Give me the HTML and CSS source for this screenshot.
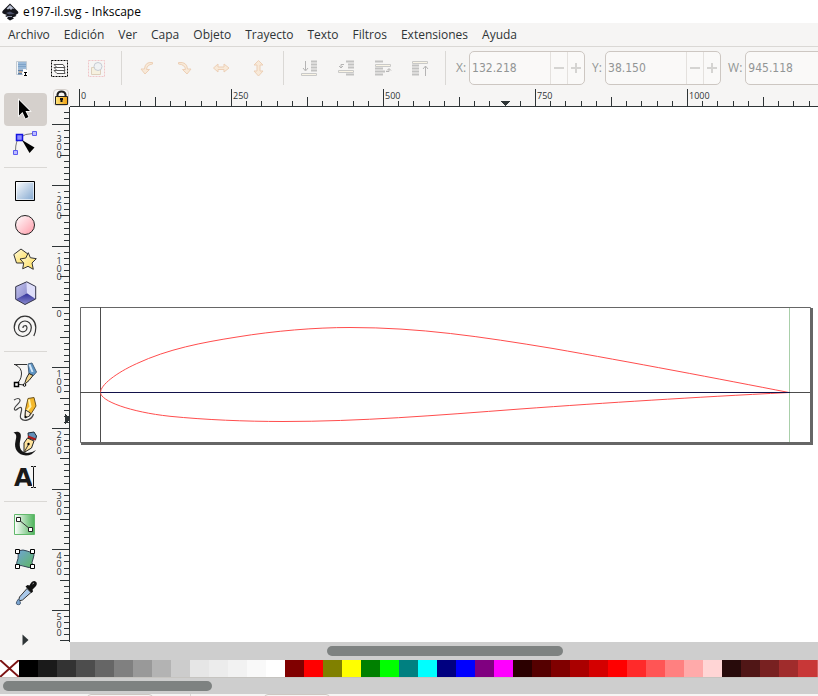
FILE: index.html
```html
<!DOCTYPE html>
<html lang="es">
<head>
<meta charset="utf-8">
<title>e197-il.svg - Inkscape</title>
<link rel="stylesheet" href="styles.css">
</head>
<body>
<header class="titlebar">
  <svg class="logo" width="18" height="18" viewBox="0 0 18 18" aria-hidden="true">
    <path d="M8 .5 1 7.500Q-1 10 2 11l3 1-2 1 3 1.500-1 1 3 2L12 15.500l-1.500-1 4-1.500-1-1 2.500-1.500Q17 9 15 7.500Z" fill="#15161c"/>
    <path d="M8 2 4.500 5.500l1.500 1L7.500 5.500 9 7l1.500-1.500 2 .5Z" fill="#b9c0d2"/>
    <path d="M4 10 8 8.500l5 2.500-6 .5Z" fill="#4a5068"/>
    <path d="M5 13.500h5" stroke="#8c93a8"/>
  </svg>
  <span>e197-il.svg - Inkscape</span>
</header>

<nav class="menubar">
  <button>Archivo</button><button>Edición</button><button>Ver</button><button>Capa</button><button>Objeto</button><button>Trayecto</button><button>Texto</button><button>Filtros</button><button>Extensiones</button><button>Ayuda</button>
</nav>

<div class="toolbar">
  <button class="tb" aria-label="Seleccionar todo">
    <svg width="17" height="17" viewBox="0 0 17 17"><path d="M2.500 1.500h10v13h-10z" fill="#f4f6f8" stroke="#c3cbd2"/><path d="M4 2h8v7H4z" fill="#9bbad9"/><path d="M4 4.500h8M4 6.500h8" stroke="#7fa3c8"/><path d="M4 10.500h5M4 13.500h4" stroke="#5b7fa8" stroke-width="2"/><path d="M5 12h3" stroke="#d99a5b"/><path d="M9 10h5v6H9z" fill="#fff"/><path d="M10 12.500h3M10 15.500h3M11.500 12.500v3" stroke="#000"/></svg>
  </button>
  <button class="tb" aria-label="Seleccionar en todas las capas">
    <svg width="17" height="17" viewBox="0 0 17 17"><path d="M.5.5h16v16H.5z" fill="none" stroke="#000" stroke-dasharray="2 1"/><g fill="#fff" stroke="#555"><path d="m3 10.500 3 3h8l-1-3z"/><path d="m3 7.500 3 3h8l-1-3z"/><path d="m3 4.500 3 3h8l-2-3z"/></g></svg>
  </button>
  <button class="tb off" aria-label="Deseleccionar" disabled>
    <svg width="17" height="17" viewBox="0 0 17 17"><path d="M.5.5h16v16H.5z" fill="none" stroke="#e87f88" stroke-dasharray="2 1"/><path d="M3.500 7.500h9v7h-9z" fill="#f7ecc0" stroke="#b99b6a"/><circle cx="10" cy="6.500" r="4" fill="#e9eef4" stroke="#7e8fa5"/></svg>
  </button>
  <i class="sep"></i>
  <button class="tb off" aria-label="Rotar a la izquierda" disabled>
    <svg width="17" height="17" viewBox="0 0 17 17"><path d="M13.500 2.500Q6 1.500 5.500 9H2l4 5 4.500-4.500-3 0Q8 4.500 13.500 4Z" class="arrow"/></svg>
  </button>
  <button class="tb off" aria-label="Rotar a la derecha" disabled>
    <svg width="17" height="17" viewBox="0 0 17 17"><path d="M2.500 2.500Q11 1.500 11.500 9H15l-4 5-4.500-4.500 3 0Q9 4.500 2.500 4Z" class="arrow"/></svg>
  </button>
  <button class="tb off" aria-label="Reflejar horizontalmente" disabled>
    <svg width="17" height="17" viewBox="0 0 17 17"><path d="M.5 8 5 4v3h6V4l5 4-5 4V9.500H5V12Z" class="arrow"/></svg>
  </button>
  <button class="tb off" aria-label="Reflejar verticalmente" disabled>
    <svg width="17" height="17" viewBox="0 0 17 17"><path d="M8.500.5 13 5h-3v6h3l-4.500 5L4 11h3V5H4Z" class="arrow"/></svg>
  </button>
  <i class="sep"></i>
  <button class="tb off" aria-label="Bajar al fondo" disabled>
    <svg width="17" height="17" viewBox="0 0 17 17"><path d="M10 1.500h6M10 4.500h6M10 7.500h6M10 10.500h6" class="rows"/><path d="M.5 13.500h15v2H.5z" class="slab"/><path d="M4.500 1v9M2 8l2.500 3L7 8" class="thin"/></svg>
  </button>
  <button class="tb off" aria-label="Bajar" disabled>
    <svg width="17" height="17" viewBox="0 0 17 17"><path d="M8 1.500h8M10 4.500h6M10 7.500h6M8 14.500h8" class="rows"/><path d="M.5 10.500h15v2H.5z" class="slab"/><path d="M6 4.500H3v3M1 6l2 2 2-2" class="thin"/></svg>
  </button>
  <button class="tb off" aria-label="Elevar" disabled>
    <svg width="17" height="17" viewBox="0 0 17 17"><path d="M0 1.500h8M0 8.500h8M0 11.500h10M0 14.500h8" class="rows"/><path d="M.5 4.500h15v2H.5z" class="slab"/><path d="M11 11.500h3V9M12 10.500l2-2 2 2" class="thin"/></svg>
  </button>
  <button class="tb off" aria-label="Elevar al frente" disabled>
    <svg width="17" height="17" viewBox="0 0 17 17"><path d="M0 5.500h7M0 8.500h7M0 11.500h7M0 14.500h7" class="rows"/><path d="M.5 1.500h15v2H.5z" class="slab"/><path d="M13.500 16V6M11 9l2.500-3L16 9" class="thin"/></svg>
  </button>
  <i class="sep"></i>
  <div class="field"><label for="fx">X:</label><div class="spin"><input id="fx" value="132.218" disabled><button aria-label="Reducir X" class="minus" disabled></button><button aria-label="Aumentar X" class="plus" disabled></button></div></div>
  <div class="field"><label for="fy">Y:</label><div class="spin"><input id="fy" value="38.150" disabled><button aria-label="Reducir Y" class="minus" disabled></button><button aria-label="Aumentar Y" class="plus" disabled></button></div></div>
  <div class="field"><label for="fw">W:</label><div class="spin"><input id="fw" value="945.118" disabled><button aria-label="Reducir W" class="minus" disabled></button><button aria-label="Aumentar W" class="plus" disabled></button></div></div>
</div>

<main class="work">
  <aside class="toolbox">
    <svg class="defs" width="0" height="0" aria-hidden="true">
      <defs>
        <linearGradient id="blue" x1="0" y1="0" x2="1" y2="1"><stop offset="0" stop-color="#fff"/><stop offset="1" stop-color="#7fa5cf"/></linearGradient>
        <linearGradient id="pink" x1="0" y1="0" x2="1" y2="1"><stop offset="0" stop-color="#fff"/><stop offset="1" stop-color="#ff9aa8"/></linearGradient>
        <linearGradient id="gold" x1="0" y1="0" x2="1" y2="1"><stop offset="0" stop-color="#fffbe0"/><stop offset="1" stop-color="#ffdc50"/></linearGradient>
        <linearGradient id="green" x1="0" y1="0" x2="1" y2="0"><stop offset="0" stop-color="#fff"/><stop offset="1" stop-color="#4db35a"/></linearGradient>
        <linearGradient id="mesh" x1="0" y1="0" x2="1" y2="1"><stop offset="0" stop-color="#6fa3d8"/><stop offset="1" stop-color="#5fb860"/></linearGradient>
        <linearGradient id="lock" x1="0" y1="0" x2="1" y2="0"><stop offset="0" stop-color="#ffe680"/><stop offset="1" stop-color="#f0a010"/></linearGradient>
        <linearGradient id="cube" x1="0" y1="0" x2="1" y2="1"><stop offset="0" stop-color="#c4c4ee"/><stop offset="1" stop-color="#8c8ccc"/></linearGradient>
        <linearGradient id="floor" x1="0" y1="0" x2="0" y2="1"><stop offset="0" stop-color="#30309a"/><stop offset="1" stop-color="#8c8cd0"/></linearGradient>
      </defs>
    </svg>
    <button class="tool on" aria-label="Seleccionar">
      <svg width="25" height="25" viewBox="0 0 25 25"><path d="M6 3v15.500l3.500-3.500 3 6.500 3-1.500-3-6h4.500Z" fill="#000" stroke="#fff" stroke-width="1.500" paint-order="stroke"/></svg>
    </button>
    <button class="tool" aria-label="Editar nodos">
      <svg width="25" height="25" viewBox="0 0 25 25"><path d="M2.500 20Q2.500 9 7 6.500 12 2.500 20 2.500" fill="none" stroke="#777"/><path d="M19.500.5h4v4h-4zM.5 19.500h4v4h-4z" fill="#bcbcff" stroke="#5c5cf0"/><path d="M3.500 3.500h6v6h-6z" fill="#8c8cff" stroke="#1414e0" stroke-width="1.500"/><path d="m9 9 12.500 7.500-5 5.500Z" fill="#000"/></svg>
    </button>
    <i class="rule"></i>
    <button class="tool" aria-label="Rectángulo">
      <svg width="25" height="25" viewBox="0 0 25 25"><path d="M2.500 2.500h19v19h-19z" fill="url(#blue)" stroke="#000"/><path d="M3.500 3.500h17v17h-17z" fill="none" stroke="#fff" stroke-opacity=".6"/></svg>
    </button>
    <button class="tool" aria-label="Elipse">
      <svg width="25" height="25" viewBox="0 0 25 25"><circle cx="12" cy="12" r="9.500" fill="url(#pink)" stroke="#222"/></svg>
    </button>
    <button class="tool" aria-label="Estrella">
      <svg width="25" height="25" viewBox="0 0 25 25"><path d="m8 2 7.500 5.500-3 8.500H3.500L.8 7.500Z" fill="url(#gold)" stroke="#333"/><path d="m15.300 5.700 2 5 6 1-4.300 4.300 1.300 6.300-5.300-3-5.300 2.500 1-5.800L7 12l5.800-1Z" fill="url(#gold)" stroke="#333"/></svg>
    </button>
    <button class="tool" aria-label="Caja 3D">
      <svg width="25" height="25" viewBox="0 0 25 25"><path d="M13.700.8 2.700 5.700v12.600L14 12.300Z" fill="url(#cube)"/><path d="m13.700.8 9 4.700V18L14 12.300Z" fill="#dedefa"/><path d="m2.700 18.300 11.300-6 8.700 5.700L12 23.500Z" fill="url(#floor)"/><path d="M13.700.8 2.700 5.700v12.600L12 23.500 22.700 18V5.500Z" fill="none" stroke="#333348"/></svg>
    </button>
    <button class="tool" aria-label="Espiral">
      <svg width="25" height="25" viewBox="0 0 25 25"><path d="M10 13a2 2 0 0 1 4-.5 4.200 4.400 0 0 1-8.400 0 6.350 6.500 0 0 1 12.700 0 8.550 9 0 0 1-17.100 0 10.800 11.300 0 0 1 21.600 0q0 5-2 8.500" fill="none" stroke="#333" stroke-width="1.200"/></svg>
    </button>
    <i class="rule"></i>
    <button class="tool" aria-label="Pluma">
      <svg width="25" height="25" viewBox="0 0 25 25"><path d="M1 1.500h13M2 1.500Q9 5 8.500 11 8 18 3 21l8 1" fill="none" stroke="#333"/><path d="m15 1 4-1 4.500 9-3 3.500-4.500-1.500Z" fill="#5f95c4" stroke="#48617a"/><path d="m16.500 1.500 3 7.500" stroke="#d4e8fa" stroke-width="2"/><path d="m16 10.500 4 2-4 5-3.500 3-.5-1 1.500-4.500Z" fill="#f3d68c" stroke="#222"/><path d="M1.500 19.500h4v4h-4z" fill="#fff" stroke="#000" stroke-width="1.500"/><circle cx="11.500" cy="22" r="1.300" fill="#fff" stroke="#000"/></svg>
    </button>
    <button class="tool" aria-label="Lápiz">
      <svg width="25" height="25" viewBox="0 0 25 25"><path d="M1 3q5-3 6 0c1 3-7 7-5.500 9.500C3 15 6 9 8 10.500c2.500 2-2.500 8 0 11C11 25 19 23 20.500 17" fill="none" stroke="#444" stroke-width="1.200"/><path d="M15 1.500 21 .5l2 8.500-6 9.500-5 2 .5-8Z" fill="#f5b92c" stroke="#6b5320"/><path d="m16 2.500 1.500 7-4 5" fill="none" stroke="#fff1a8" stroke-width="2"/><path d="m12.500 13 5 3-1 3-4.500 2Z" fill="#f9ecd6" stroke="#333"/><path d="m12 18.500 2.500 1.500L12 21Z"/></svg>
    </button>
    <button class="tool" aria-label="Caligrafía">
      <svg width="25" height="25" viewBox="0 0 25 25"><path d="M.5 1.500C6-.5 9 2 7.500 8 6 14 6 21 14 22q5 0 9-3-4 5.500-10 5.500C5 24 .5 18 2.500 10 3.500 6 4 3 .5 1.500Z" fill="#151515"/><path d="m15 2 6-1 2.500 4-1 4-7-2Z" fill="#628fb8" stroke="#1c2a38"/><path d="m15 5.500 7.500 3" stroke="#b01818" stroke-width="2"/><path d="m14.500 7 6.500 3-2.500 7-7.500 4.500 0-9.500Z" fill="#ffe29a" stroke="#222"/><path d="m11.500 20.500 4-7" stroke="#333"/><circle cx="15.500" cy="13" r="1.200"/></svg>
    </button>
    <button class="tool" aria-label="Texto">
      <svg width="25" height="25" viewBox="0 0 25 25"><text x="1" y="21" class="letter">A</text><path d="M18 2.500h2M21 2.500h2M18 22.500h2M21 22.500h2M20.500 2.500v20" fill="none" stroke="#f6f5f4" stroke-width="3"/><path d="M18 1.500h2l.5 1 .5-1h2M18 22.500h2l.5-1 .5 1h2M20.500 2.500v19" fill="none" stroke="#111"/></svg>
    </button>
    <i class="rule"></i>
    <button class="tool" aria-label="Degradado">
      <svg width="25" height="25" viewBox="0 0 25 25"><path d="M1.500 1.500h20v20h-20z" fill="url(#green)" stroke="#62b96c"/><path d="m6 7 11 9" stroke="#333"/><path d="M3.500 4.500h4v4h-4zM15.500 14.500h4v4h-4z" fill="#fff" stroke="#222"/></svg>
    </button>
    <button class="tool" aria-label="Malla">
      <svg width="25" height="25" viewBox="0 0 25 25"><path d="M4 4q7-2 10 0 3 2 6 0 2 4 0 8-2 3 0 7.500-4 2-8 0-4-2-8 0-1-4 1-8 1-3-1-7.500Z" fill="url(#mesh)" stroke="#345"/><path d="M2.500 2.500h4v4h-4zM17.500 2.500h4v4h-4zM2.500 17.500h4v4h-4zM17.500 17.500h4v4h-4z" fill="#fff" stroke="#000"/></svg>
    </button>
    <button class="tool" aria-label="Cuentagotas">
      <svg width="25" height="25" viewBox="0 0 25 25"><path d="m14 7.500 4 4-8.500 7.500-4 1 1-4Z" fill="#a9c8ea" stroke="#333"/><path d="m12.500 5.500 2-1.500 2 .5Q19-.5 22 .2q3 1.300 1 4.800l-3.500 3.500.5 2-1.500 1.500Z" fill="#111"/><path d="m19.500 3 1.500-1" stroke="#999"/><path d="M5.500 18q-4.500 5.500 0 5.700 4-.2 0-5.700Z" fill="#7ba4cf" stroke="#4a5f78"/></svg>
    </button>
    <button class="more" aria-label="Más herramientas"><svg width="7" height="12" viewBox="0 0 7 12"><path d="m.5.500 6 5.500-6 5.500Z" fill="#2e3436"/></svg></button>
  </aside>
  <button class="corner" aria-label="Bloquear guías">
    <svg width="15" height="16" viewBox="0 0 15 16"><path d="M3.500 7V4.500Q4 1.500 7.500 1.500T11.500 4.500V7" fill="none" stroke="#222" stroke-width="2"/><path d="M1.500 6.500h12v8h-12z" fill="url(#lock)" stroke="#222"/><path d="M6 9h3M7.500 9v3" stroke="#111" stroke-width="2"/></svg>
  </button>
  <svg class="ruler-x" id="ruler-x" shape-rendering="crispEdges"></svg>
  <svg class="ruler-y" id="ruler-y" shape-rendering="crispEdges"></svg>
  <svg class="canvas" role="img" aria-label="Perfil alar e197">
    <g transform="translate(10 200)" fill="none">
      <path d="M1 1h732v137H1z" fill="#666"/>
      <path d="M.5.500h730v135H.5z" fill="#fff" stroke="#666"/>
      <path d="M20.500 0v135" stroke="#4d4d4d"/>
      <path d="M709.500 1v134" stroke="#a9cfaa"/>
      <path d="M20.500 85.500C20.500 78 36 66 56.700 56.600 88 42 122 35.500 157 30 195 23.800 235 20.500 270 20.500 340 20.500 400 29.500 473 41.500 550 55 640 72 709 85.500" stroke="#ff4d4d"/>
      <path d="M20.500 85.500C20.500 94 50 105 90 109.300 125 112.800 165 114.500 203 114.500 280 114.500 355 108.500 440 102 530 95.500 610 90.500 709 85.500" stroke="#ff4d4d"/>
      <path d="M0 85.500h730" stroke="#4d4d4d"/>
      <path d="M21 85.500h689" stroke="#12124a"/>
    </g>
  </svg>
  <div class="scroll-x"><div class="thumb canvas-thumb"></div></div>
</main>

<div class="palette" id="palette"></div>
<div class="palette-scroll"><div class="thumb palette-thumb"></div></div>
<footer class="status"><i class="chip"></i><i class="divider"></i><i class="chip"></i></footer>
<script src="script.js"></script>
</body>
</html>
```
FILE: styles.css
```css
* { box-sizing: border-box; }
html, body { height: 100%; margin: 0; }
body {
  display: flex;
  flex-direction: column;
  overflow: hidden;
  background: #f6f5f4;
  color: #2e3436;
  font: 12px/16px "Open Sans", "Noto Sans", sans-serif;
}
button {
  margin: 0;
  padding: 0;
  border: 0;
  background: none;
  color: inherit;
  font: inherit;
}
svg { display: block; }

.titlebar {
  flex: none;
  display: flex;
  align-items: center;
  gap: 3px;
  height: 23px;
  padding-left: 2px;
  background: #fff;
  color: #000;
}
.menubar {
  flex: none;
  display: flex;
  gap: 14px;
  height: 24px;
  padding-left: 8px;
  border-bottom: 1px solid #dad8d5;
}

.toolbar {
  flex: none;
  display: flex;
  align-items: center;
  height: 42px;
  padding-left: 4px;
  overflow: hidden;
}
.tb {
  flex: none;
  display: grid;
  place-items: center;
  width: 37px;
  height: 34px;
}
.off svg { opacity: .4; }
.arrow { fill: #fbd9b0; stroke: #e0995a; }
.rows { stroke: #777; stroke-width: 2; }
.slab { fill: #fff3cf; stroke: #888; }
.thin { fill: none; stroke: #555; }
.sep {
  flex: none;
  width: 1px;
  height: 34px;
  margin: 0 7px 0 6px;
  background: #dad8d5;
}
.field {
  flex: none;
  display: flex;
  align-items: center;
  gap: 3px;
  margin-left: 3px;
  margin-right: 4px;
  color: #929595;
}
.field label { min-width: 10px; }
.spin {
  display: flex;
  width: 116px;
  height: 34px;
  border: 1px solid #cdc7c2;
  border-radius: 5px;
  background: #faf9f8;
}
.spin input {
  flex: 1;
  min-width: 0;
  padding: 0 2px;
  border: 0;
  background: none;
  color: #929595;
  font: 12px "DejaVu Sans Condensed", "DejaVu Sans", sans-serif;
}
.spin button {
  width: 17px;
  border-left: 1px solid #e4e1de;
  background: linear-gradient(#d5d4d2, #d5d4d2) center / 10px 2px no-repeat;
}
.spin .plus {
  background:
    linear-gradient(#d5d4d2, #d5d4d2) center / 10px 2px no-repeat,
    linear-gradient(#d5d4d2, #d5d4d2) center / 2px 10px no-repeat;
}

.work {
  flex: 1;
  min-height: 0;
  display: grid;
  grid-template: 18px minmax(0, 1fr) 18px / 52px 18px minmax(0, 1fr);
}
.toolbox {
  grid-row: 1 / 4;
  display: flex;
  flex-direction: column;
  padding: 3px 5px 0 4px;
  overflow: hidden;
}
.defs { position: absolute; }
.tool {
  flex: none;
  height: 33px;
  margin-top: 1px;
  padding: 4px 9px;
  border-radius: 4px;
}
.tool svg { overflow: visible; }
.tool.on { background: #d5d0cc; }
.rule {
  flex: none;
  height: 1px;
  margin: 7px 0 6px;
  background: #dad8d5;
}
.more {
  flex: none;
  display: grid;
  place-items: center;
  height: 60px;
}
.letter { font: bold 24px/24px "DejaVu Sans", sans-serif; fill: #1a1a1a; }
.corner {
  display: grid;
  place-items: center;
  margin: 0 1px 1px;
  border: 1px solid #d5d0cc;
  border-radius: 4px;
}
.ruler-x, .ruler-y, .canvas { width: 100%; height: 100%; }
.ruler-x path, .ruler-y path { stroke: #2e3436; fill: none; }
.ruler-x .mark, .ruler-y .mark { fill: #2e3436; stroke: none; }
.ruler-x text, .ruler-y text { font-size: 9px; fill: #2e3436; }
.ruler-y text { text-anchor: middle; }
.canvas { background: #fff; }
.scroll-x {
  grid-column: 3;
  padding: 4px 0 0 257px;
  background: #cecece;
}
.thumb {
  height: 10px;
  border-radius: 5px;
  background: #7e8281;
}
.canvas-thumb { width: 236px; }
.palette-thumb { width: 209px; }
.palette {
  flex: none;
  display: flex;
  height: 17px;
  overflow: hidden;
}
.swatch { flex: none; width: 19px; height: 17px; }
.none { background: #fff; }
.palette-scroll {
  flex: none;
  height: 17px;
  padding: 3px 3px 0;
  border-top: 1px solid #c6c4c0;
  background: #cecece;
}
.status {
  flex: none;
  display: flex;
  gap: 37px;
  height: 2px;
  padding: 0 87px;
  overflow: hidden;
}
.chip {
  width: 66px;
  height: 24px;
  border: 1px solid #cdc7c2;
  border-radius: 4px;
}
.divider { width: 1px; margin-right: 36px; background: #dad8d5; }
```
FILE: script.js
```js
const NS = 'http://www.w3.org/2000/svg';

function add(parent, name, attrs, text) {
  const node = document.createElementNS(NS, name);
  for (const key in attrs) node.setAttribute(key, attrs[key]);
  if (text !== undefined) node.textContent = text;
  parent.appendChild(node);
}

// Ten ticks per labelled step; the middle one is longer.
function tickLength(i) {
  if (i % 10 === 0) return 17;
  return i % 5 === 0 ? 9 : 5;
}

function drawRulerX(svg) {
  const width = svg.clientWidth;
  const origin = 9, step = 152;
  let d = `M0 17.5H${width}`;
  for (let i = 0; origin + i * step / 10 < width; i++) {
    const x = origin + Math.round(i * step / 10) + 0.5;
    d += `M${x} 18v${-tickLength(i) - 1}`;
    if (i % 10 === 0) add(svg, 'text', { x: x + 1.5, y: 10 }, i * 25);
  }
  add(svg, 'path', { d });
  add(svg, 'path', { d: 'M430 12h10l-5 5z', class: 'mark' });
}

function drawRulerY(svg) {
  const height = svg.clientHeight;
  const origin = 200, step = 60.7;
  let d = `M17.5 0V${height}`;
  for (let i = -32; origin + i * step / 10 < height; i++) {
    const y = origin + Math.floor(i * step / 10) + 0.5;
    d += `M18 ${y}h${-tickLength(i) - 1}`;
    if (i % 10 === 0) {
      // One character per line, stacked down the ruler.
      const label = String(i * 10);
      const xs = [...label].map(() => 7).join(' ');
      const ys = [...label].map((ch, n) => y + 9 + n * 8).join(' ');
      add(svg, 'text', { x: xs, y: ys }, label);
    }
  }
  add(svg, 'path', { d });
  add(svg, 'path', { d: 'M13 307v10l5-5z', class: 'mark' });
}

const colors = `000000 1a1a1a 333333 4d4d4d 666666 808080 999999 b3b3b3 cccccc
  e6e6e6 ececec f2f2f2 f9f9f9 ffffff 800000 ff0000 808000 ffff00 008000 00ff00
  008080 00ffff 000080 0000ff 800080 ff00ff 2b0000 550000 800000 aa0000 d40000
  ff0000 ff2a2a ff5555 ff8080 ffaaaa ffd5d5 280b0b 501616 782121 a02c2c c83737
  d35f5f`.split(/\s+/);

function drawPalette(box) {
  box.innerHTML = '<button class="swatch none" aria-label="Ninguno">' +
    '<svg width="19" height="17"><path d="M0 0 19 17M19 0 0 17" stroke="#7d1414" stroke-width="2"/></svg></button>';
  for (const color of colors) {
    const swatch = document.createElement('button');
    swatch.className = 'swatch';
    swatch.style.background = '#' + color;
    swatch.setAttribute('aria-label', '#' + color);
    box.appendChild(swatch);
  }
}

drawRulerX(document.getElementById('ruler-x'));
drawRulerY(document.getElementById('ruler-y'));
drawPalette(document.getElementById('palette'));
```
